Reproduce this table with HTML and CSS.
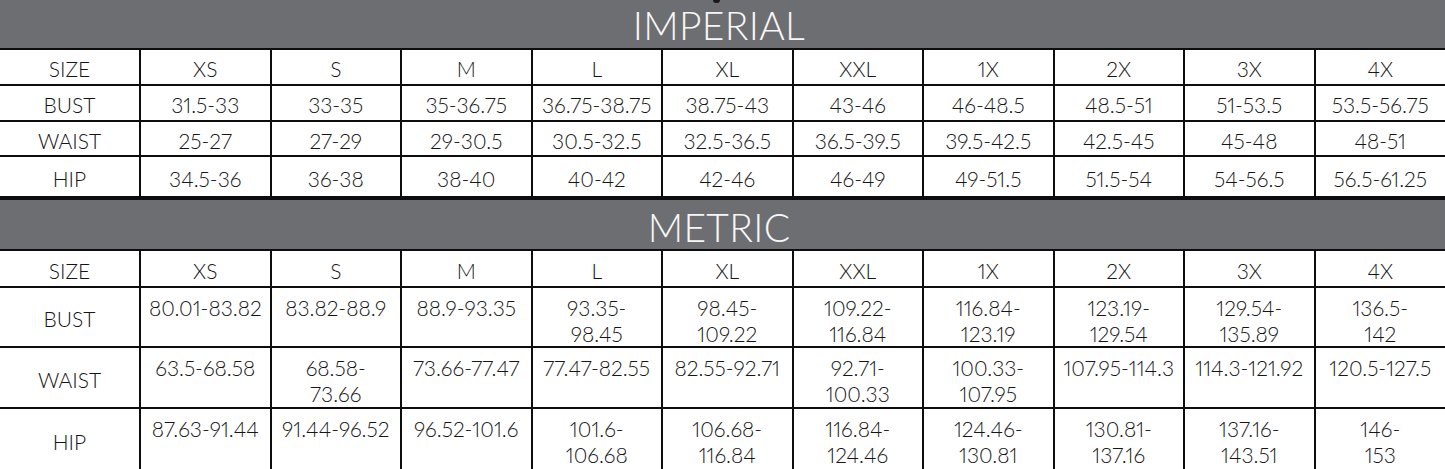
FILE: index.html
```html
<!DOCTYPE html>
<html lang="en">
<head>
<meta charset="utf-8">
<title>Size Chart</title>
<link rel="stylesheet" href="styles.css">
</head>
<body>
<main class="chart">
  <section class="block">
    <div class="band band-imperial">
      <span class="cut-mark"></span>
      <h2 class="band-title">IMPERIAL</h2>
    </div>
    <div class="grid grid-imperial">
      <div class="cell label">SIZE</div><div class="cell">XS</div><div class="cell">S</div><div class="cell">M</div><div class="cell">L</div><div class="cell">XL</div><div class="cell">XXL</div><div class="cell">1X</div><div class="cell">2X</div><div class="cell">3X</div><div class="cell">4X</div>
      <div class="cell label">BUST</div><div class="cell">31.5-33</div><div class="cell">33-35</div><div class="cell">35-36.75</div><div class="cell">36.75-38.75</div><div class="cell">38.75-43</div><div class="cell">43-46</div><div class="cell">46-48.5</div><div class="cell">48.5-51</div><div class="cell">51-53.5</div><div class="cell">53.5-56.75</div>
      <div class="cell label">WAIST</div><div class="cell">25-27</div><div class="cell">27-29</div><div class="cell">29-30.5</div><div class="cell">30.5-32.5</div><div class="cell">32.5-36.5</div><div class="cell">36.5-39.5</div><div class="cell">39.5-42.5</div><div class="cell">42.5-45</div><div class="cell">45-48</div><div class="cell">48-51</div>
      <div class="cell label">HIP</div><div class="cell">34.5-36</div><div class="cell">36-38</div><div class="cell">38-40</div><div class="cell">40-42</div><div class="cell">42-46</div><div class="cell">46-49</div><div class="cell">49-51.5</div><div class="cell">51.5-54</div><div class="cell">54-56.5</div><div class="cell">56.5-61.25</div>
    </div>
  </section>
  <section class="block">
    <div class="band band-metric">
      <h2 class="band-title">METRIC</h2>
    </div>
    <div class="grid grid-metric">
      <div class="cell label">SIZE</div><div class="cell">XS</div><div class="cell">S</div><div class="cell">M</div><div class="cell">L</div><div class="cell">XL</div><div class="cell">XXL</div><div class="cell">1X</div><div class="cell">2X</div><div class="cell">3X</div><div class="cell">4X</div>
      <div class="cell label">BUST</div><div class="cell val">80.01-83.82</div><div class="cell val">83.82-88.9</div><div class="cell val">88.9-93.35</div><div class="cell val">93.35-<br>98.45</div><div class="cell val">98.45-<br>109.22</div><div class="cell val">109.22-<br>116.84</div><div class="cell val">116.84-<br>123.19</div><div class="cell val">123.19-<br>129.54</div><div class="cell val">129.54-<br>135.89</div><div class="cell val">136.5-<br>142</div>
      <div class="cell label">WAIST</div><div class="cell val">63.5-68.58</div><div class="cell val">68.58-<br>73.66</div><div class="cell val">73.66-77.47</div><div class="cell val">77.47-82.55</div><div class="cell val">82.55-92.71</div><div class="cell val">92.71-<br>100.33</div><div class="cell val">100.33-<br>107.95</div><div class="cell val">107.95-114.3</div><div class="cell val">114.3-121.92</div><div class="cell val">120.5-127.5</div>
      <div class="cell label">HIP</div><div class="cell val">87.63-91.44</div><div class="cell val">91.44-96.52</div><div class="cell val">96.52-101.6</div><div class="cell val">101.6-<br>106.68</div><div class="cell val">106.68-<br>116.84</div><div class="cell val">116.84-<br>124.46</div><div class="cell val">124.46-<br>130.81</div><div class="cell val">130.81-<br>137.16</div><div class="cell val">137.16-<br>143.51</div><div class="cell val">146-<br>153</div>
    </div>
  </section>
</main>
</body>
</html>
```
FILE: styles.css
```css
html, body {
  margin: 0;
  padding: 0;
  background: #ffffff;
}

body {
  font-family: "Lato", "Liberation Sans", sans-serif;
  font-weight: 300;
  color: #151515;
  overflow: hidden;
}

.chart {
  width: 1445px;
}

.block {
  display: flex;
  flex-direction: column;
}

.band {
  position: relative;
  background: #6d6e71;
  display: flex;
  justify-content: center;
  padding-right: 7px;
}

.band-imperial {
  height: 48px;
}

.band-metric {
  height: 49px;
}

.band-title {
  margin: 0;
  font-family: "Lato", "Liberation Sans", sans-serif;
  font-weight: 300;
  font-size: 39px;
  line-height: 39px;
  color: #f7f7f7;
  letter-spacing: 0.3px;
}

.band-imperial .band-title {
  padding-top: 6px;
}

.band-metric .band-title {
  padding-top: 8px;
}

.cut-mark {
  position: absolute;
  top: 0;
  left: 713px;
  width: 7px;
  height: 3px;
  background: #1a1a1a;
  border-radius: 0 0 4px 4px;
}

.grid {
  display: grid;
  grid-template-columns: 139px repeat(9, 128.5px) 1fr;
  column-gap: 2px;
  row-gap: 2px;
  background: #0d0d0d;
}

.grid-imperial {
  grid-template-rows: 34px 34px 33px 39px;
  padding: 2px 0 4px 0;
}

.grid-metric {
  grid-template-rows: 35px 58px 59px 62px;
  padding: 2px 0 0 0;
}

.cell {
  background: #ffffff;
  display: flex;
  align-items: center;
  justify-content: center;
  text-align: center;
  font-size: 21px;
  line-height: 26px;
  font-variant-numeric: proportional-nums;
  white-space: nowrap;
  padding-top: 4px;
  box-sizing: border-box;
}

.cell.val {
  align-items: flex-start;
  padding-top: 7px;
}
```
